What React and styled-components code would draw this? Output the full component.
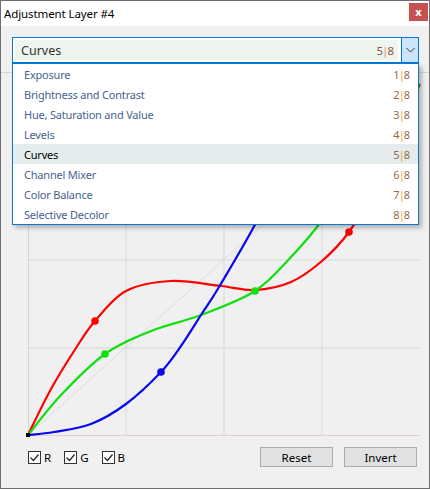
import React from "react";
import styled, { createGlobalStyle } from "styled-components";

const Global = createGlobalStyle`
  html, body { margin: 0; padding: 0; background: #f0f0f0; }
  body { font-family: "Noto Sans", "Open Sans", sans-serif; }
`;

const adjustments = [
  "Exposure",
  "Brightness and Contrast",
  "Hue, Saturation and Value",
  "Levels",
  "Curves",
  "Channel Mixer",
  "Color Balance",
  "Selective Decolor",
];

const curves = [
  {
    color: "#ff0000",
    pts: [[27, 436], [50, 390], [75, 349], [94, 322], [125, 292], [170, 282], [220, 287], [254, 291], [290, 283], [321, 262], [348, 233], [370, 195], [395, 140], [419, 85]],
    dots: [[94, 322], [348, 233]],
  },
  {
    color: "#10e010",
    pts: [[27, 436], [60, 396], [104, 355], [150, 332], [200, 316], [254, 292], [290, 258], [322, 220], [360, 160], [419, 85]],
    dots: [[104, 355], [254, 292]],
  },
  {
    color: "#0808f0",
    pts: [[27, 436], [53, 433], [90, 425], [125, 405], [160, 373], [180, 347], [200, 316], [218, 288], [257, 220], [290, 150], [330, 85]],
    dots: [[160, 373]],
  },
];

function smooth(pts) {
  let d = `M${pts[0][0]},${pts[0][1]}`;
  for (let i = 0; i < pts.length - 1; i++) {
    const p0 = pts[i - 1] || pts[i];
    const p1 = pts[i];
    const p2 = pts[i + 1];
    const p3 = pts[i + 2] || p2;
    const c1x = p1[0] + (p2[0] - p0[0]) / 6;
    const c1y = p1[1] + (p2[1] - p0[1]) / 6;
    const c2x = p2[0] - (p3[0] - p1[0]) / 6;
    const c2y = p2[1] - (p3[1] - p1[1]) / 6;
    d += ` C${c1x},${c1y} ${c2x},${c2y} ${p2[0]},${p2[1]}`;
  }
  return d;
}

function Count({ n }) {
  return (
    <CountText>
      {n}
      <Bar>|</Bar>8
    </CountText>
  );
}

function Check({ label }) {
  return (
    <CheckItem>
      <Box>
        <svg width="11" height="11" viewBox="0 0 11 11">
          <polyline points="1.5,5.5 4.5,8.5 9.5,2.5" fill="none" stroke="#222" strokeWidth="1.2" />
        </svg>
      </Box>
      {label}
    </CheckItem>
  );
}

function App() {
  return (
    <Window>
      <Global />
      <TitleBar>
        <Title>Adjustment Layer #4</Title>
        <Close>x</Close>
      </TitleBar>
      <Body>
        <Combo>
          <ComboField>
            <ComboLabel>Curves</ComboLabel>
            <HeadCount>
              5<HeadBar>|</HeadBar>8
            </HeadCount>
          </ComboField>
          <DropButton>
            <svg width="9" height="6" viewBox="0 0 9 6">
              <polyline points="0.5,1 4.5,5 8.5,1" fill="none" stroke="#333" strokeWidth="1" />
            </svg>
          </DropButton>
          <List>
            {adjustments.map((name, i) => (
              <Item key={name} $active={name === "Curves"}>
                <span>{name}</span>
                <Count n={i + 1} />
              </Item>
            ))}
          </List>
        </Combo>
        <Separator />
        <Graph viewBox="20 80 406 362" width="406" height="362">
          {[125, 223, 321].map((x) => (
            <line key={x} x1={x} y1="85" x2={x} y2="436" stroke="#d8d8d8" strokeWidth="1" />
          ))}
          {[85, 173, 261, 349].map((y) => (
            <line key={y} x1="27" y1={y} x2="419" y2={y} stroke="#d8d8d8" strokeWidth="1" />
          ))}
          <line x1="27.5" y1="85" x2="27.5" y2="436" stroke="#e2cfcf" strokeWidth="1" />
          <line x1="27" y1="436.5" x2="419" y2="436.5" stroke="#e2cfcf" strokeWidth="1" />
          <line x1="27" y1="436" x2="419" y2="85" stroke="#d2d2d2" strokeWidth="0.7" />
          {curves.map((c) => (
            <g key={c.color}>
              <path d={smooth(c.pts)} fill="none" stroke={c.color} strokeWidth="2.2" />
              {c.dots.map(([x, y]) => (
                <circle key={x} cx={x} cy={y} r="3.8" fill={c.color} />
              ))}
            </g>
          ))}
          <rect x="25" y="434" width="4" height="4" fill="#000" />
        </Graph>
        <Footer>
          <Checks>
            <Check label="R" />
            <Check label="G" />
            <Check label="B" />
          </Checks>
          <Buttons>
            <Button>Reset</Button>
            <Button>Invert</Button>
          </Buttons>
        </Footer>
      </Body>
    </Window>
  );
}

export default App;

const Window = styled.div`
  width: 430px;
  height: 489px;
  box-sizing: border-box;
  border: 1px solid #6e6e6e;
  display: flex;
  flex-direction: column;
  background: #f0f0f0;
  overflow: hidden;
`;

const TitleBar = styled.div`
  height: 25px;
  background: #ffffff;
  display: flex;
  align-items: center;
  justify-content: space-between;
  padding: 0 1px 0 3px;
`;

const Title = styled.div`
  font-size: 11.5px;
  letter-spacing: -0.1px;
  color: #000;
  margin-top: -1px;
`;

const Close = styled.div`
  width: 19px;
  height: 18px;
  margin-top: -4px;
  background: #c75050;
  color: #fff;
  font-size: 11px;
  font-weight: bold;
  display: flex;
  align-items: center;
  justify-content: center;
  line-height: 1;
`;

const Body = styled.div`
  flex: 1;
  padding: 11px 9px 0 11px;
  display: flex;
  flex-direction: column;
`;

const Combo = styled.div`
  position: relative;
  z-index: 2;
  width: 407px;
  height: 26px;
  box-sizing: border-box;
  border: 1px solid #0078d7;
  background: #fff;
  display: flex;
`;

const ComboField = styled.div`
  flex: 1;
  margin: 2px 3px 2px 2px;
  background: #eef5ec;
  display: flex;
  align-items: center;
  justify-content: space-between;
  padding: 0 4px 0 6px;
`;

const ComboLabel = styled.span`
  font-size: 12.5px;
  color: #333;
`;

const HeadCount = styled.span`
  font-size: 11.5px;
  color: #9a5244;
`;

const HeadBar = styled.span`
  color: #e58a78;
  margin: 0 -1px;
`;

const DropButton = styled.div`
  width: 16px;
  background: #cce4f7;
  border-left: 1px solid #0078d7;
  display: flex;
  align-items: center;
  justify-content: center;
`;

const List = styled.div`
  position: absolute;
  top: calc(100% + 1px);
  left: -1px;
  right: -1px;
  background: #fff;
  border: 1px solid #0078d7;
  border-top: 1px solid #0078d7;
  box-shadow: 3px 3px 4px rgba(0, 0, 0, 0.25);
`;

const Item = styled.div`
  height: 20px;
  display: flex;
  align-items: center;
  justify-content: space-between;
  padding: 0 8px 0 11px;
  font-size: 11px;
  letter-spacing: -0.2px;
  color: ${(p) => (p.$active ? "#000" : "#45638f")};
  background: ${(p) => (p.$active ? "#e4ecee" : "transparent")};
`;

const CountText = styled.span`
  color: #9a6b44;
  letter-spacing: 0;
`;

const Bar = styled.span`
  color: #e8a640;
  margin: 0 -1px;
`;

const Separator = styled.div`
  height: 1px;
  background: #d4d4d4;
  margin: 9px -9px 0 -11px;
`;

const Graph = styled.svg`
  display: block;
  margin: 6px 0 0 9px;
  overflow: visible;
`;

const Footer = styled.div`
  margin-top: 6px;
  height: 20px;
  display: flex;
  align-items: center;
  justify-content: space-between;
  padding: 0 3px 0 16px;
`;

const Checks = styled.div`
  display: flex;
  align-items: center;
  gap: 13px;
`;

const CheckItem = styled.label`
  display: flex;
  align-items: center;
  gap: 3px;
  font-size: 11.5px;
  color: #000;
`;

const Box = styled.span`
  width: 13px;
  height: 13px;
  box-sizing: border-box;
  border: 1px solid #333;
  background: #fff;
  display: flex;
  align-items: center;
  justify-content: center;
`;

const Buttons = styled.div`
  display: flex;
  gap: 11px;
`;

const Button = styled.button`
  width: 73px;
  height: 20px;
  box-sizing: border-box;
  border: 1px solid #adadad;
  background: #e1e1e1;
  font-family: "Noto Sans", "Open Sans", sans-serif;
  font-size: 11.5px;
  color: #000;
  padding: 0;
`;
